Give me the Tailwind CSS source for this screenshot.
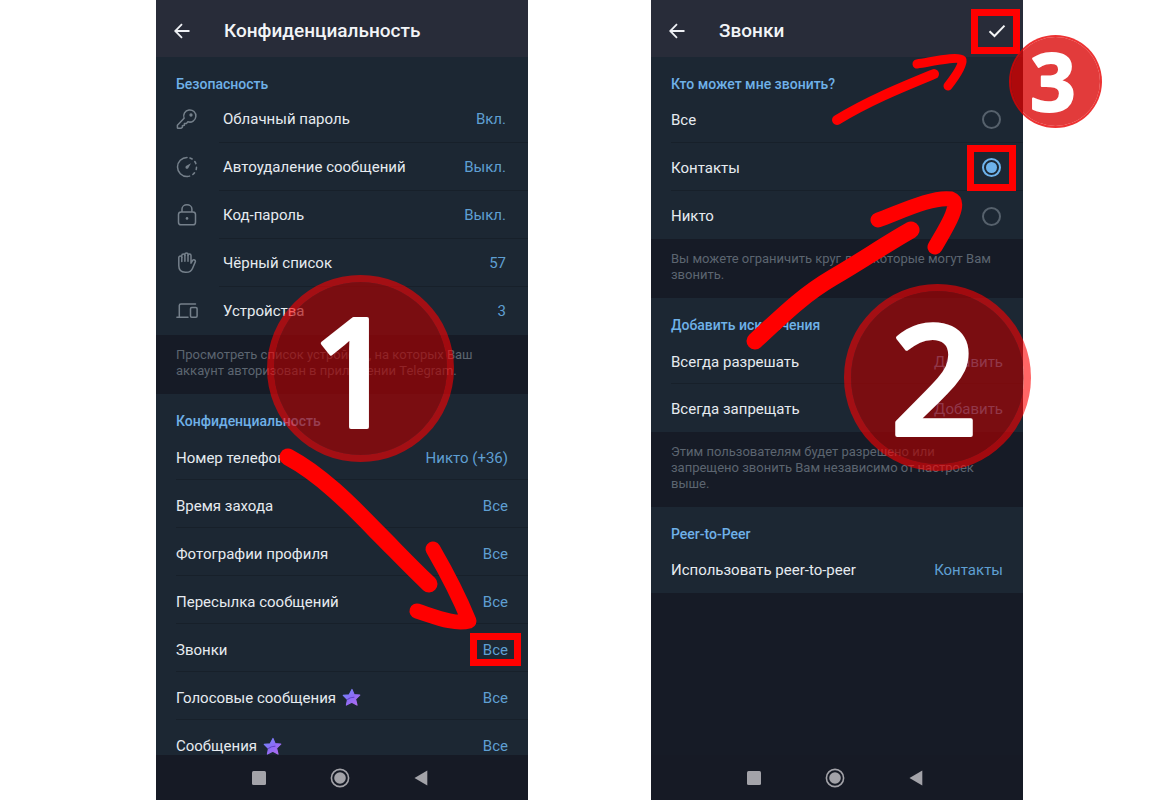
<!DOCTYPE html>
<html lang="ru">
<head>
    <meta charset="UTF-8">
    <meta name="viewport" content="width=device-width, initial-scale=1.0">
    <title>Конфиденциальность звонков</title>
    <script src="https://cdn.jsdelivr.net/npm/@tailwindcss/browser@4"></script>
</head>
<body class="bg-white h-screen overflow-hidden font-[Roboto,'Noto_Sans',sans-serif] text-[15px] leading-5 text-[#e6ebf0]">
<svg class="absolute size-0" aria-hidden="true">
    <defs>
        <linearGradient id="premium" x1="0" y1="0" x2="1" y2="1">
            <stop offset="0" stop-color="#6f8bff"/>
            <stop offset=".5" stop-color="#8d6cf5"/>
            <stop offset="1" stop-color="#b56cf0"/>
        </linearGradient>
        <symbol id="star" viewBox="0 0 20 20">
            <path d="M10.500 1.500L12.700 6.900L18.700 7.500L14.300 11.700L15.800 18L10.300 14.900L4.600 18L5.800 12.300L1.300 7.800L7.600 7.200Z" fill="url(#premium)" stroke="url(#premium)" stroke-width="1.200" stroke-linejoin="round"/>
            <path d="M5.500 12.300C7.600 10.400 10 9.700 13 9.800" fill="none" stroke="#5a3fc4" stroke-width="1.100"/>
        </symbol>
        <symbol id="back" viewBox="0 0 16 16">
            <path d="M15.500 8H1.500M8 1.200L1.200 8L8 14.800" fill="none" stroke="#eef0f4" stroke-width="1.800"/>
        </symbol>
    </defs>
</svg>

<div class="h-full flex gap-[123px] pl-[156px] pr-[149px]">

    <!-- Экран 1: Конфиденциальность -->
    <div class="relative flex-1 min-w-0 h-full flex flex-col bg-[#161b26]">
        <header class="shrink-0 h-[57px] flex items-center gap-[34px] pl-[18px] pt-1 bg-[#282c39]">
            <button type="button" aria-label="Назад"><svg class="size-4"><use href="#back"/></svg></button>
            <h1 class="text-[19px] font-medium text-[#f2f4f7]">Конфиденциальность</h1>
        </header>

        <main class="flex-1 min-h-0 overflow-hidden">
            <section class="bg-[#1c2733]">
                <h2 class="pt-4 px-5 h-[38px] leading-[22px] text-sm font-medium text-[#6fb1e8]">Безопасность</h2>
                <button type="button" class="w-full h-12 flex items-center pl-5">
                    <svg class="size-[22px] shrink-0" viewBox="0 0 22 22" fill="none" stroke="#75808b" stroke-width="1.500" stroke-linejoin="round" stroke-linecap="round">
                        <path d="M8.100 10.200A6.100 6.100 0 1 1 11.900 13.800L10.400 15.400H8.400V17.300L6.400 17.800V19.300L4.800 20.300H2Q1.400 20.300 1.400 19.700V17.200Z"/>
                        <circle cx="15" cy="7" r=".9" fill="#75808b"/>
                    </svg>
                    <span class="ml-[21px] pl-1 pr-[22px] h-12 flex-1 flex items-center justify-between border-b border-[#17202a]">
                        <span>Облачный пароль</span><span class="text-[#5f9fd2]">Вкл.</span>
                    </span>
                </button>
                <button type="button" class="w-full h-12 flex items-center pl-5">
                    <svg class="size-[22px] shrink-0" viewBox="0 0 22 22" fill="none" stroke="#75808b" stroke-width="1.500" stroke-linecap="round">
                        <path d="M11 1.500A9.500 9.500 0 0 0 11 20.500"/>
                        <path d="M11 1.500A9.500 9.500 0 0 1 11 20.500" stroke-dasharray="2.400 3.600" stroke-dashoffset="-3"/>
                        <path d="M15 7.200L12.200 12.300Q10.800 13.400 9.700 12.300Q9 11 10 10Z" fill="#75808b" stroke="none"/>
                    </svg>
                    <span class="ml-[21px] pl-1 pr-[22px] h-12 flex-1 flex items-center justify-between border-b border-[#17202a]">
                        <span>Автоудаление сообщений</span><span class="text-[#5f9fd2]">Выкл.</span>
                    </span>
                </button>
                <button type="button" class="w-full h-12 flex items-center pl-5">
                    <svg class="size-[22px] shrink-0" viewBox="0 0 22 22" fill="none" stroke="#75808b" stroke-width="1.500">
                        <rect x="2.500" y="8" width="17" height="12.800" rx="2.600"/>
                        <path d="M6 8V5A4.900 4.200 0 0 1 15.900 5V8"/>
                        <circle cx="11" cy="14.400" r="1.300" fill="#75808b" stroke="none"/>
                    </svg>
                    <span class="ml-[21px] pl-1 pr-[22px] h-12 flex-1 flex items-center justify-between border-b border-[#17202a]">
                        <span>Код-пароль</span><span class="text-[#5f9fd2]">Выкл.</span>
                    </span>
                </button>
                <button type="button" class="w-full h-12 flex items-center pl-5">
                    <svg class="size-[22px] shrink-0" viewBox="0 0 22 22" fill="none" stroke="#75808b" stroke-width="1.500" stroke-linecap="round" stroke-linejoin="round">
                        <path d="M2.800 5.500A1.500 1.500 0 0 1 5.800 5.500V3.500A1.500 1.500 0 0 1 8.900 3.500V2.500A1.500 1.500 0 0 1 12 2.500V3.500A1.500 1.500 0 0 1 15 3.500V11.200L16.800 8.200A1.600 1.600 0 0 1 19.400 9.600L16.600 16.200Q14.900 20.300 10.300 20.300H9.300Q2.800 20 2.800 13.800Z"/>
                        <path d="M5.800 5.500V9.500M8.900 3.500V9.300M12 3.500V9.300"/>
                    </svg>
                    <span class="ml-[21px] pl-1 pr-[22px] h-12 flex-1 flex items-center justify-between border-b border-[#17202a]">
                        <span>Чёрный список</span><span class="text-[#5f9fd2]">57</span>
                    </span>
                </button>
                <button type="button" class="w-full h-12 flex items-center pl-5">
                    <svg class="size-[22px] shrink-0" viewBox="0 0 22 22" fill="none" stroke="#75808b" stroke-width="1.500" stroke-linecap="round">
                        <path d="M3.300 17V5.500Q3.300 3.900 4.900 3.900H19.500M.9 17.300H12"/>
                        <rect x="14.500" y="7.500" width="6.600" height="9.800" rx="1.200"/>
                    </svg>
                    <span class="ml-[21px] pl-1 pr-[22px] h-12 flex-1 flex items-center justify-between">
                        <span>Устройства</span><span class="text-[#5f9fd2]">3</span>
                    </span>
                </button>
            </section>

            <p class="px-5 pt-3 pb-[15px] text-[13px] leading-4 text-[#5c6570]">Просмотреть список устройств, на которых Ваш аккаунт авторизован в приложении Telegram.</p>

            <section class="bg-[#1c2733]">
                <h2 class="pt-4 px-5 h-[38px] leading-[22px] text-sm font-medium text-[#6fb1e8]">Конфиденциальность</h2>
                <div class="pl-5">
                    <button type="button" class="w-full h-12 pt-1 pr-5 flex items-center justify-between border-b border-[#17202a]">
                        <span>Номер телефона</span><span class="text-[#5f9fd2]">Никто (+36)</span>
                    </button>
                    <button type="button" class="w-full h-12 pt-1 pr-5 flex items-center justify-between border-b border-[#17202a]">
                        <span>Время захода</span><span class="text-[#5f9fd2]">Все</span>
                    </button>
                    <button type="button" class="w-full h-12 pt-1 pr-5 flex items-center justify-between border-b border-[#17202a]">
                        <span>Фотографии профиля</span><span class="text-[#5f9fd2]">Все</span>
                    </button>
                    <button type="button" class="w-full h-12 pt-1 pr-5 flex items-center justify-between border-b border-[#17202a]">
                        <span>Пересылка сообщений</span><span class="text-[#5f9fd2]">Все</span>
                    </button>
                    <button type="button" class="w-full h-12 pt-1 pr-5 flex items-center justify-between border-b border-[#17202a]">
                        <span>Звонки</span><span class="text-[#5f9fd2]">Все</span>
                    </button>
                    <button type="button" class="w-full h-12 pt-1 pr-5 flex items-center justify-between border-b border-[#17202a]">
                        <span class="flex items-center gap-1.5">Голосовые сообщения <svg class="size-[19px]"><use href="#star"/></svg></span><span class="text-[#5f9fd2]">Все</span>
                    </button>
                    <button type="button" class="w-full h-12 pt-1 pr-5 flex items-center justify-between">
                        <span class="flex items-center gap-1.5">Сообщения <svg class="size-[19px]"><use href="#star"/></svg></span><span class="text-[#5f9fd2]">Все</span>
                    </button>
                </div>
            </section>
        </main>

        <nav class="shrink-0 h-[45px] flex items-center justify-center gap-[61px] pr-1 bg-[#161a25]">
            <button type="button" aria-label="Недавние"><svg class="size-5" viewBox="0 0 20 20"><rect x="3" y="3" width="14" height="14" rx="1.500" fill="#a3a3a9"/></svg></button>
            <button type="button" aria-label="Домой"><svg class="size-5" viewBox="0 0 20 20"><circle cx="10" cy="10" r="8.600" fill="none" stroke="#a3a3a9" stroke-width="1.600"/><circle cx="10" cy="10" r="5.800" fill="#a3a3a9"/></svg></button>
            <button type="button" aria-label="Назад"><svg class="size-5" viewBox="0 0 20 20"><path d="M3.500 10L16.300 2.500V17.500Z" fill="#a3a3a9"/></svg></button>
        </nav>

        <!-- Пометки поверх экрана -->
        <div class="absolute left-[111px] top-[275px] size-[187px] rounded-full border-[7px] border-[#ff0000]/60 bg-[#ae0000]/65 bg-clip-padding"></div>
        <svg class="absolute left-0 top-0 w-[372px] h-[800px] pointer-events-none" viewBox="156 0 372 800" fill="none" stroke="#ff0000" stroke-linecap="round" stroke-linejoin="round">
            <text x="354" y="427" text-anchor="middle" fill="#fff" stroke="#fff" stroke-width="4" class="font-['Noto_Sans','Open_Sans',sans-serif] text-[151px] font-medium">1</text>
            <path d="M288 457C320 474 350 504 376 531C396 551 410 566 429 584" stroke-width="17"/>
            <path d="M433 549C444 568 458 594 469 621C455 625 436 617 417 611" stroke-width="15"/>
        </svg>
        <div class="absolute right-[7px] top-[633px] w-[51px] h-[33px] border-[7px] border-[#ff0000]"></div>
    </div>

    <!-- Экран 2: Звонки -->
    <div class="relative flex-1 min-w-0 h-full flex flex-col bg-[#161b26]">
        <header class="shrink-0 h-[57px] flex items-center gap-[34px] pl-[18px] pr-[17px] pt-1 bg-[#282c39]">
            <button type="button" aria-label="Назад"><svg class="size-4"><use href="#back"/></svg></button>
            <h1 class="flex-1 text-[19px] font-medium text-[#f2f4f7]">Звонки</h1>
            <button type="button" aria-label="Готово"><svg class="size-[18px]" viewBox="0 0 18 18"><path d="M1.500 9.200L6.500 14L16.500 3.600" fill="none" stroke="#f4f5f7" stroke-width="2"/></svg></button>
        </header>

        <main class="flex-1 min-h-0 overflow-hidden">
            <section class="bg-[#1c2733]">
                <h2 class="pt-4 px-5 h-[38px] leading-[22px] text-sm font-medium text-[#6fb1e8]">Кто может мне звонить?</h2>
                <div class="pl-5">
                    <label class="h-12 pt-[2px] pr-[22px] flex items-center justify-between border-b border-[#17202a]">
                        Все
                        <input type="radio" name="calls" class="appearance-none size-[19px] rounded-full border-2 border-[#56616c]">
                    </label>
                    <label class="h-12 pt-[2px] pr-[22px] flex items-center justify-between border-b border-[#17202a]">
                        Контакты
                        <input type="radio" name="calls" checked class="appearance-none size-[19px] rounded-full border-2 border-[#56616c] checked:border-[#6eb2ea] checked:bg-[#6eb2ea] checked:bg-clip-content p-[2px]">
                    </label>
                    <label class="h-12 pt-[2px] pr-[22px] flex items-center justify-between">
                        Никто
                        <input type="radio" name="calls" class="appearance-none size-[19px] rounded-full border-2 border-[#56616c]">
                    </label>
                </div>
            </section>

            <p class="px-5 pt-3 pb-[15px] text-[13px] leading-4 text-[#5c6570]">Вы можете ограничить круг лиц, которые могут Вам звонить.</p>

            <section class="bg-[#1c2733]">
                <h2 class="pt-4 px-5 h-[38px] leading-[22px] text-sm font-medium text-[#6fb1e8]">Добавить исключения</h2>
                <div class="pl-5">
                    <button type="button" class="w-full h-12 pt-1 pr-5 flex items-center justify-between border-b border-[#17202a]">
                        <span>Всегда разрешать</span><span class="text-[#5f9fd2]">Добавить</span>
                    </button>
                    <button type="button" class="w-full h-12 pt-[2px] pr-5 flex items-center justify-between">
                        <span>Всегда запрещать</span><span class="text-[#5f9fd2]">Добавить</span>
                    </button>
                </div>
            </section>

            <p class="px-5 pt-3 pb-[15px] text-[13px] leading-4 text-[#5c6570]">Этим пользователям будет разрешено или запрещено звонить Вам независимо от настроек выше.</p>

            <section class="bg-[#1c2733]">
                <h2 class="pt-4 px-5 h-[38px] leading-[22px] text-sm font-medium text-[#6fb1e8]">Peer-to-Peer</h2>
                <button type="button" class="w-full h-12 pt-[2px] px-5 flex items-center justify-between">
                    <span>Использовать peer-to-peer</span><span class="text-[#5f9fd2]">Контакты</span>
                </button>
            </section>
        </main>

        <nav class="shrink-0 h-[45px] flex items-center justify-center gap-[61px] pr-1 bg-[#161a25]">
            <button type="button" aria-label="Недавние"><svg class="size-5" viewBox="0 0 20 20"><rect x="3" y="3" width="14" height="14" rx="1.500" fill="#a3a3a9"/></svg></button>
            <button type="button" aria-label="Домой"><svg class="size-5" viewBox="0 0 20 20"><circle cx="10" cy="10" r="8.600" fill="none" stroke="#a3a3a9" stroke-width="1.600"/><circle cx="10" cy="10" r="5.800" fill="#a3a3a9"/></svg></button>
            <button type="button" aria-label="Назад"><svg class="size-5" viewBox="0 0 20 20"><path d="M3.500 10L16.300 2.500V17.500Z" fill="#a3a3a9"/></svg></button>
        </nav>

        <!-- Пометки поверх экрана -->
        <div class="absolute right-[7px] top-[145px] w-[49px] h-[46px] border-[7px] border-[#ff0000]"></div>
        <div class="absolute right-[3px] top-[9px] w-[49px] h-[45px] border-[7px] border-[#ff0000]"></div>
        <div class="absolute -right-2 top-[284px] size-[187px] rounded-full border-[7px] border-[#ff0000]/60 bg-[#ae0000]/65 bg-clip-padding"></div>
        <div class="absolute -right-[79px] top-[35px] size-[93px] rounded-full border-2 border-[#e80000]/80 bg-[#d90000]/77 bg-clip-padding"></div>
        <svg class="absolute right-0 top-0 w-[372px] h-[800px] overflow-visible pointer-events-none" viewBox="651 0 372 800" fill="none" stroke="#ff0000" stroke-linecap="round" stroke-linejoin="round">
            <path d="M755 341C782 316 803 295 832 278C860 262 886 244 911 230" stroke-width="17"/>
            <path d="M878 220C900 212 933 196 951 199C962 203 946 228 935 247" stroke-width="15"/>
            <path d="M837 120C868 101 900 88 934 74" stroke-width="10"/>
            <path d="M917 64C936 61 958 56 962 60C963 66 955 77 948 86" stroke-width="9"/>
            <text x="934" y="435" text-anchor="middle" fill="#fff" stroke="#fff" stroke-width="4" class="font-['Noto_Sans','Open_Sans',sans-serif] text-[153px] font-medium">2</text>
            <text x="1053" y="111" text-anchor="middle" fill="#fff" stroke="#fff" stroke-width="2" class="font-['Noto_Sans','Open_Sans',sans-serif] text-[80px] font-bold">3</text>
        </svg>
    </div>
</div>
</body>
</html>
